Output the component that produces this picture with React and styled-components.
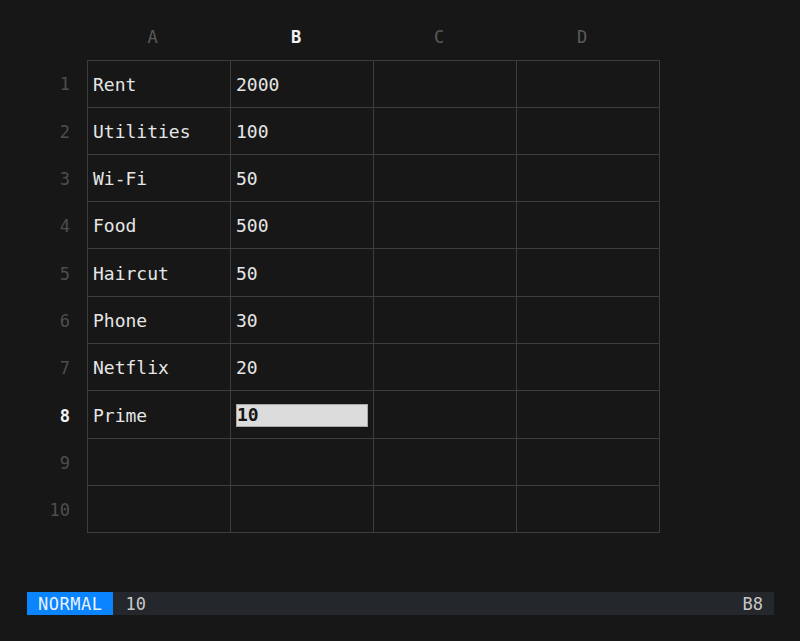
import React from 'react';
import styled, { createGlobalStyle } from 'styled-components';

const GlobalStyle = createGlobalStyle`
  html, body {
    margin: 0;
    padding: 0;
    background: #171717;
  }
  body {
    font-family: "DejaVu Sans Mono", "Liberation Mono", monospace;
  }
`;

const Page = styled.div`
  width: 800px;
  height: 641px;
  background: #171717;
  display: flex;
  flex-direction: column;
  box-sizing: border-box;
  padding-top: 13px;
`;

const Sheet = styled.div`
  display: grid;
  grid-template-columns: 47px 144px repeat(3, 143px);
  grid-auto-rows: 47.3px;
  margin-left: 40px;
`;

const ColHead = styled.div`
  display: flex;
  align-items: center;
  justify-content: center;
  padding: 1px 13px 0 0;
  font-size: 17px;
  color: ${(p) => (p.active ? '#f2f2f2' : '#5a5a5a')};
  font-weight: ${(p) => (p.active ? 700 : 400)};
`;

const RowHead = styled.div`
  display: flex;
  align-items: center;
  justify-content: flex-end;
  padding: 1px 17px 0 0;
  font-size: 17px;
  color: ${(p) => (p.active ? '#f2f2f2' : '#4e4e4e')};
  font-weight: ${(p) => (p.active ? 700 : 400)};
`;

const Corner = styled.div``;

const Cell = styled.div`
  display: flex;
  align-items: center;
  padding: 1px 5px 0;
  font-size: 18px;
  color: #e6e6e6;
  border-right: 1px solid #3d3d3d;
  border-bottom: 1px solid #3d3d3d;
  border-left: ${(p) => (p.first ? '1px solid #3d3d3d' : 'none')};
  border-top: ${(p) => (p.top ? '1px solid #3d3d3d' : 'none')};
  white-space: nowrap;
  overflow: hidden;
`;

const Editor = styled.div`
  width: 132px;
  height: 23px;
  box-sizing: border-box;
  background: #dcdcdc;
  border: 1px solid #a8a8a8;
  color: #161616;
  font-weight: 700;
  font-size: 18px;
  display: flex;
  align-items: center;
  line-height: 1;
`;

const StatusBar = styled.div`
  margin: auto 26px 26px 27px;
  height: 23px;
  background: #24272b;
  display: flex;
  align-items: center;
  font-size: 17px;
  color: #c8c8c8;
`;

const Mode = styled.div`
  background: #0a84ff;
  color: #e8f2ff;
  height: 100%;
  display: flex;
  align-items: center;
  padding: 0 11px 0 11px;
  letter-spacing: 0.5px;
`;

const StatusValue = styled.div`
  margin-left: 12px;
  flex: 1;
`;

const StatusRef = styled.div`
  margin-right: 11px;
`;

const cols = ['A', 'B', 'C', 'D'];
const data = [
  ['Rent', '2000'],
  ['Utilities', '100'],
  ['Wi-Fi', '50'],
  ['Food', '500'],
  ['Haircut', '50'],
  ['Phone', '30'],
  ['Netflix', '20'],
  ['Prime', '10'],
  [],
  [],
];

export default function App() {
  const sel = { row: 7, col: 1 };
  return (
    <Page>
      <GlobalStyle />
      <Sheet>
        <Corner />
        {cols.map((c, i) => (
          <ColHead key={c} active={i === sel.col}>{c}</ColHead>
        ))}
        {data.map((row, r) => (
          <React.Fragment key={r}>
            <RowHead active={r === sel.row}>{r + 1}</RowHead>
            {cols.map((c, ci) => (
              <Cell key={c} first={ci === 0} top={r === 0}>
                {r === sel.row && ci === sel.col ? (
                  <Editor>{row[ci]}</Editor>
                ) : (
                  row[ci] || ''
                )}
              </Cell>
            ))}
          </React.Fragment>
        ))}
      </Sheet>
      <StatusBar>
        <Mode>NORMAL</Mode>
        <StatusValue>10</StatusValue>
        <StatusRef>B8</StatusRef>
      </StatusBar>
    </Page>
  );
}
